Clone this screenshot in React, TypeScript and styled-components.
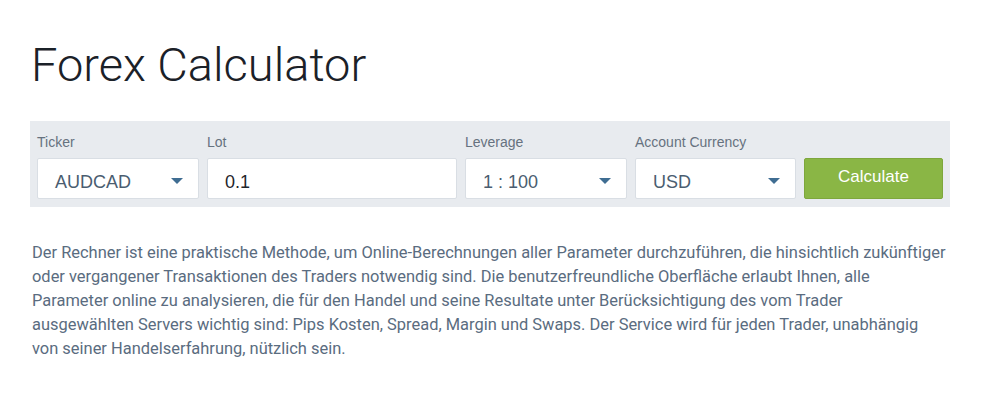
import React from 'react'
import styled, { createGlobalStyle } from 'styled-components'

const GlobalStyle = createGlobalStyle`
    body {
        margin: 0;
        background: #ffffff;
    }
`

const Page = styled.div`
    padding: 35px 50px 0 30px;
    font-family: Roboto, 'Liberation Sans', sans-serif;
`

const Title = styled.h1`
    margin: 0 0 0 1px;
    font-size: 47px;
    line-height: 60px;
    font-weight: 300;
    color: #1b2128;
`

const Panel = styled.div`
    margin-top: 26px;
    background: #e8ebef;
    padding: 12px 7px 8px 7px;
    display: flex;
    gap: 8px;
    align-items: flex-end;
    font-family: 'Liberation Sans', Arial, sans-serif;
`

const Field = styled.div<{ $width: number }>`
    width: ${({ $width }) => $width}px;
    display: flex;
    flex-direction: column;
    gap: 6px;
`

const Label = styled.label`
    font-size: 14px;
    line-height: 19px;
    color: #66727f;
`

const Box = styled.div`
    height: 41px;
    box-sizing: border-box;
    background: #ffffff;
    border: 1px solid #d9dee4;
    border-radius: 2px;
    display: flex;
    align-items: center;
    justify-content: space-between;
    padding: 0 15px 0 17px;
`

const Value = styled.span<{ $dark?: boolean }>`
    font-size: 18px;
    padding-top: 7px;
    color: ${({ $dark }) => ($dark ? '#1f252b' : '#4a5d70')};
`

const Arrow = styled.span`
    width: 0;
    height: 0;
    border-left: 6px solid transparent;
    border-right: 6px solid transparent;
    border-top: 6px solid #3f6d92;
    margin-top: 4px;
`

const Button = styled.button`
    width: 139px;
    height: 41px;
    background: #8ab645;
    border: 1px solid #7ea73d;
    border-radius: 2px;
    color: #ffffff;
    font-family: 'Liberation Sans', Arial, sans-serif;
    font-size: 17px;
    padding: 0 0 3px 0;
    cursor: pointer;
`

const Description = styled.p`
    margin: 34px 0 0 2px;
    font-size: 16.45px;
    line-height: 24px;
    color: #5a6c80;
    white-space: nowrap;
`

const Select = ({ label, value, width }: { label: string; value: string; width: number }) => (
    <Field $width={width}>
        <Label>{label}</Label>
        <Box>
            <Value>{value}</Value>
            <Arrow />
        </Box>
    </Field>
)

const lines = [
    'Der Rechner ist eine praktische Methode, um Online-Berechnungen aller Parameter durchzuführen, die hinsichtlich zukünftiger',
    'oder vergangener Transaktionen des Traders notwendig sind. Die benutzerfreundliche Oberfläche erlaubt Ihnen, alle',
    'Parameter online zu analysieren, die für den Handel und seine Resultate unter Berücksichtigung des vom Trader',
    'ausgewählten Servers wichtig sind: Pips Kosten, Spread, Margin und Swaps. Der Service wird für jeden Trader, unabhängig',
    'von seiner Handelserfahrung, nützlich sein.',
]

export default function App() {
    return (
        <Page>
            <GlobalStyle />
            <Title>Forex Calculator</Title>
            <Panel>
                <Select label="Ticker" value="AUDCAD" width={162} />
                <Field $width={250}>
                    <Label>Lot</Label>
                    <Box>
                        <Value $dark>0.1</Value>
                    </Box>
                </Field>
                <Select label="Leverage" value="1 : 100" width={162} />
                <Select label="Account Currency" value="USD" width={161} />
                <Button>Calculate</Button>
            </Panel>
            <Description>
                {lines.map((line, i) => (
                    <React.Fragment key={i}>
                        {line}
                        {i < lines.length - 1 && <br />}
                    </React.Fragment>
                ))}
            </Description>
        </Page>
    )
}
